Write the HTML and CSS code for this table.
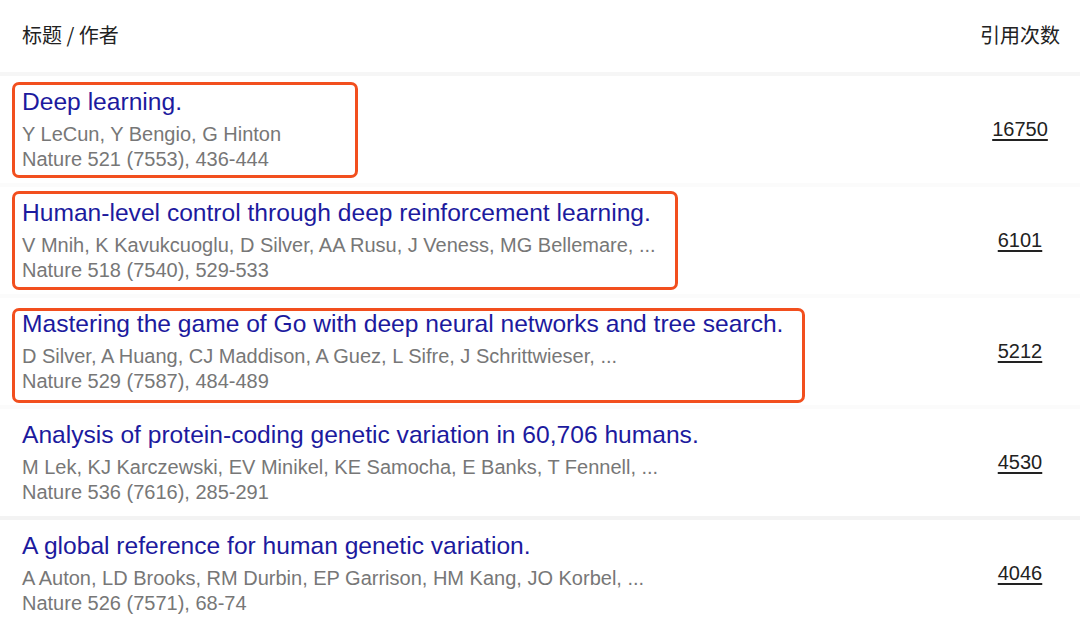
FILE: index.html
```html
<!DOCTYPE html>
<html lang="zh">
<head>
<meta charset="utf-8">
<title>引用</title>
<link rel="stylesheet" href="styles.css">
</head>
<body>
<div class="table">
  <div class="head">
    <div class="h-title">标题 / 作者</div>
    <div class="h-cite">引用次数</div>
  </div>

  <div class="row">
    <div class="info">
      <a class="title">Deep learning.</a>
      <div class="meta">Y LeCun, Y Bengio, G Hinton</div>
      <div class="meta">Nature 521 (7553), 436-444</div>
    </div>
    <div class="cite"><a>16750</a></div>
    <div class="mark mark1"></div>
  </div>

  <div class="row">
    <div class="info">
      <a class="title">Human-level control through deep reinforcement learning.</a>
      <div class="meta">V Mnih, K Kavukcuoglu, D Silver, AA Rusu, J Veness, MG Bellemare, ...</div>
      <div class="meta">Nature 518 (7540), 529-533</div>
    </div>
    <div class="cite"><a>6101</a></div>
    <div class="mark mark2"></div>
  </div>

  <div class="row">
    <div class="info">
      <a class="title">Mastering the game of Go with deep neural networks and tree search.</a>
      <div class="meta">D Silver, A Huang, CJ Maddison, A Guez, L Sifre, J Schrittwieser, ...</div>
      <div class="meta">Nature 529 (7587), 484-489</div>
    </div>
    <div class="cite"><a>5212</a></div>
    <div class="mark mark3"></div>
  </div>

  <div class="row row-sep">
    <div class="info">
      <a class="title">Analysis of protein-coding genetic variation in 60,706 humans.</a>
      <div class="meta">M Lek, KJ Karczewski, EV Minikel, KE Samocha, E Banks, T Fennell, ...</div>
      <div class="meta">Nature 536 (7616), 285-291</div>
    </div>
    <div class="cite"><a>4530</a></div>
  </div>

  <div class="row">
    <div class="info">
      <a class="title">A global reference for human genetic variation.</a>
      <div class="meta">A Auton, LD Brooks, RM Durbin, EP Garrison, HM Kang, JO Korbel, ...</div>
      <div class="meta">Nature 526 (7571), 68-74</div>
    </div>
    <div class="cite"><a>4046</a></div>
  </div>
</div>
</body>
</html>
```

FILE: styles.css
```css
* { box-sizing: border-box; }
html, body {
  margin: 0;
  padding: 0;
  background: #ffffff;
  font-family: "Liberation Sans", Arial, "Noto Sans CJK SC", sans-serif;
  overflow: hidden;
}
.table {
  width: 1080px;
  display: flex;
  flex-direction: column;
}
.head {
  height: 76px;
  display: flex;
  align-items: center;
  justify-content: space-between;
  padding: 0 0 4px 22px;
  border-bottom: 4px solid #f6f6f6;
  font-family: "Noto Sans CJK SC", "Liberation Sans", sans-serif;
  font-size: 20px;
  color: #222;
}
.h-cite {
  width: 120px;
  text-align: center;
}
.row {
  position: relative;
  height: 111px;
  display: flex;
  align-items: center;
  padding-left: 22px;
  border-bottom: 4px solid #fbfbfb;
}
.row-sep {
  border-bottom-color: #f3f3f3;
}
.info {
  flex: 1;
  align-self: flex-start;
  padding-top: 13px;
  display: flex;
  flex-direction: column;
}
.title {
  font-size: 24.6px;
  line-height: 26px;
  color: #1c1a9e;
  margin-bottom: 7px;
  white-space: nowrap;
}
.meta {
  font-size: 20px;
  line-height: 25px;
  color: #777777;
  white-space: nowrap;
}
.cite {
  width: 120px;
  text-align: center;
  font-size: 20px;
  color: #222;
}
.cite a {
  text-decoration: underline;
  text-underline-offset: 3px;
}
.mark {
  position: absolute;
  left: 12px;
  border: 3px solid #f24f1e;
  border-radius: 7px;
}
.mark1 { top: 6px; width: 346px; height: 96px; }
.mark2 { top: 4px; width: 666px; height: 99px; }
.mark3 { top: 10px; width: 793px; height: 95px; }
```
